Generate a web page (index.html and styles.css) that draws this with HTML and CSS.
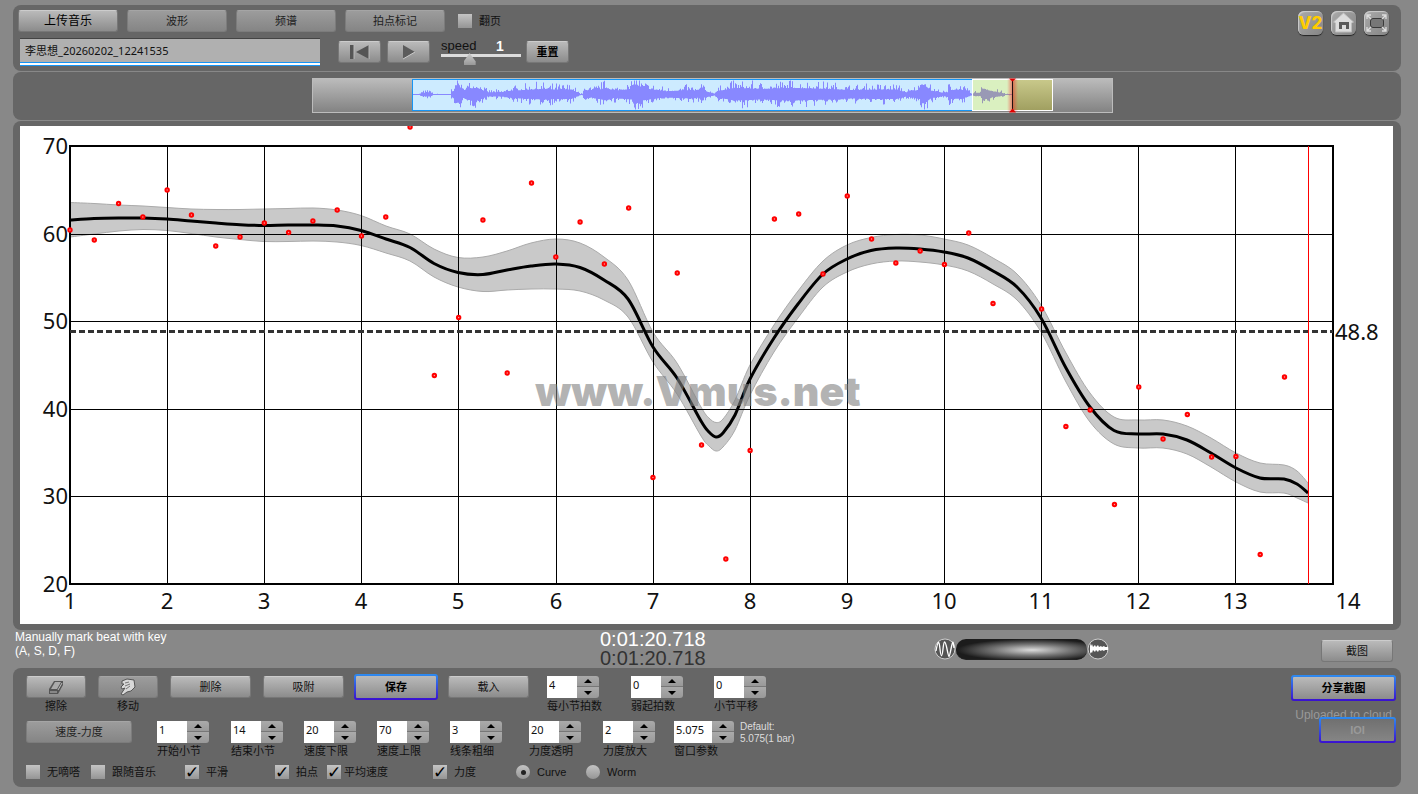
FILE: index.html
```html
<!DOCTYPE html>
<html lang="zh-CN">
<head>
<meta charset="utf-8">
<title>Vmus</title>
<link rel="stylesheet" href="styles.css">
</head>
<body>
<main class="app">
  <header class="panel top">
    <div class="top-left">
      <div class="row tabs">
        <button class="btn tab strong">上传音乐</button>
        <button class="btn tab dim">波形</button>
        <button class="btn tab dim">频谱</button>
        <button class="btn tab dim">拍点标记</button>
        <label class="check"><input type="checkbox"><span>翻页</span></label>
      </div>
      <div class="row transport">
        <input class="file-name" type="text" aria-label="文件名" value="李思想_20260202_12241535">
        <div class="row play-group">
          <button class="btn small" aria-label="回到开头"><svg width="22" height="18" viewBox="0 0 22 18"><path d="M1 2h4v14H1zM20 2v14L7 9z" fill="#555"/><path d="M20 2v14M5 2v14" stroke="#bbb"/></svg></button>
          <button class="btn small" aria-label="播放"><svg width="16" height="18" viewBox="0 0 16 18"><path d="M2 2v14l12-7z" fill="#5b5b5b"/><path d="M2 16l12-7" stroke="#ccc"/></svg></button>
        </div>
        <div class="speed">
          <label for="speed">speed</label><output for="speed">1</output>
          <input id="speed" type="range" min="0" max="3" step="0.1" value="1">
        </div>
        <button class="btn small bold">重置</button>
      </div>
    </div>
    <nav class="top-icons">
      <a class="icon v2" href="#v2">V2</a>
      <a class="icon" href="#home" aria-label="主页"><svg width="25" height="24" viewBox="0 0 25 24"><path d="M2.500 11L12.500 2 22.500 11 20.500 12v9h-16v-9z" fill="#ddd" stroke="#bbb"/><path d="M8 11h10v7h-3v-4h-4v4H8z" fill="#5a5a5a"/></svg></a>
      <a class="icon" href="#full" aria-label="全屏"><svg width="25" height="24" viewBox="0 0 25 24" fill="none"><rect x="6.500" y="7.500" width="13" height="9" rx="2.500" fill="#777" stroke="#3a3a3a"/><path d="M3 8V4h4M18 4h4v4M22 16v4h-4M7 20H3v-4M3 4l4 4M22 4l-4 4M22 20l-4-4M3 20l4-4" stroke="#ddd" stroke-width="1.300"/></svg></a>
    </nav>
  </header>

  <section class="panel overview">
    <svg id="wave" viewBox="311 78 801 35" role="img" aria-label="波形总览">
      <defs>
        <linearGradient id="track" x2="0" y2="1"><stop stop-color="#bcbcbc"/><stop offset="1" stop-color="#828282"/></linearGradient>
        <linearGradient id="olive" x2="0" y2="1"><stop stop-color="#c9c98b"/><stop offset="1" stop-color="#a09f60"/></linearGradient>
        <linearGradient id="glow"><stop stop-color="#f33" stop-opacity="0"/><stop offset=".5" stop-color="#e22" stop-opacity=".55"/><stop offset="1" stop-color="#f33" stop-opacity="0"/></linearGradient>
      </defs>
      <rect x="311.500" y="78.500" width="800" height="34" fill="url(#track)" stroke="#bcbcbc"/>
      <rect x="411.500" y="79.500" width="600" height="31" fill="#cdebff" stroke="#1795f5"/>
      <rect x="971.500" y="79.500" width="40" height="31" fill="#daf0c0"/>
      <rect x="1011.500" y="79.500" width="40" height="31" fill="url(#olive)"/>
      <path id="wave-main" fill="#8888ff"/>
      <path id="wave-tail" fill="#9999b5"/>
      <rect x="971.500" y="79.500" width="80" height="31" fill="none" stroke="#fff"/>
      <rect x="1006" y="79" width="11" height="33" fill="url(#glow)"/>
      <path d="M1011.500 80v31" stroke="#201010"/>
      <path d="M1008 78.500h7l-3.500 3zM1008 112.500h7l-3.500-4z" fill="#e00000"/>
    </svg>
  </section>

  <section class="panel chart-panel">
    <svg id="chart" viewBox="20 126 1373 498" role="img" aria-label="速度力度曲线">
      <path id="band" fill="#c9c9c9" stroke="#aaa" stroke-width="1"/>
      <g id="grid" stroke="#000" shape-rendering="crispEdges"></g>
      <path d="M70 331.500H1333" stroke="#333" stroke-width="3" stroke-dasharray="6 3"/>
      <path id="curve" fill="none" stroke="#000" stroke-width="3"/>
      <g id="dots" fill="#f9a0a0" stroke="#f00" stroke-width="2"></g>
      <g id="labels" class="axis"></g>
      <text class="axis" x="1335" y="340">48.8</text>
      <path d="M1308.500 146v438" stroke="#f00"/>
      <text class="watermark" x="698" y="406" text-anchor="middle">www.Vmus.net</text>
    </svg>
  </section>

  <section class="status">
    <p class="hint">Manually mark beat with key<br>(A, S, D, F)</p>
    <div class="clock"><time>0:01:20.718</time><time class="total">0:01:20.718</time></div>
    <div class="mix">
      <svg width="22" height="24" viewBox="0 0 22 24"><circle cx="11" cy="12" r="10" fill="#555" stroke="#ccc"/><path d="M2 14C4 3 5 3 6 12s2 9 3 0 2-10 4 0 2 10 4 0 2-8 3-1" fill="none" stroke="#fff" stroke-width="1.300"/></svg>
      <div class="mix-bar"></div>
      <svg width="22" height="24" viewBox="0 0 22 24"><circle cx="11" cy="12" r="10" fill="#555" stroke="#ccc"/><path d="M3 6l1 3 1-2 1 3 2-2 1 2 2-2 1 2 2-1 1 1 2-1 1 1 3 0v3l-3 0-1 1-2-1-1 1-2-1-1 2-2-2-1 2-2-2-1 3-1-1-1 2z" fill="#fff"/></svg>
    </div>
    <button class="btn shot">截图</button>
  </section>

  <footer class="panel bottom">
    <div class="controls">
      <div class="tool-row">
        <div class="tool"><button class="btn w60" aria-label="擦除"><svg width="20" height="18" viewBox="0 0 20 18"><path d="M3 11L8 3h9v4l-5 9H3z" fill="#555"/><path d="M9 4h6l-4 7H5z" fill="#aaa"/><path d="M12 12l4-7M4 14h7" stroke="#bbb"/></svg></button><span>擦除</span></div>
        <div class="tool"><button class="btn w60 dim" aria-label="移动"><svg width="20" height="20" viewBox="0 0 20 20"><path d="M4 4l5-2 7 1 1 7-4 4-4 1-4 3-2-1 4-6-3 1-1-2 3-3-2 0z" fill="#d8d8d8" stroke="#555"/><path d="M7 6l4-1M7 9l5-2M8 12l4-3" stroke="#777"/></svg></button><span>移动</span></div>
        <button class="btn w81">删除</button>
        <button class="btn w81">吸附</button>
        <button class="btn focus bold save">保存</button>
        <button class="btn w81">载入</button>
        <div class="fields beats">
          <div class="field"><div class="spin"><input id="f1" type="text" value="4"><button class="up" aria-label="加"></button><button class="down" aria-label="减"></button></div><label for="f1">每小节拍数</label></div>
          <div class="field"><div class="spin"><input id="f2" type="text" value="0"><button class="up" aria-label="加"></button><button class="down" aria-label="减"></button></div><label for="f2">弱起拍数</label></div>
          <div class="field"><div class="spin"><input id="f3" type="text" value="0"><button class="up" aria-label="加"></button><button class="down" aria-label="减"></button></div><label for="f3">小节平移</label></div>
        </div>
      </div>
      <div class="tool-row second">
        <button class="btn mode dim">速度-力度</button>
        <div class="fields params">
          <div class="field"><div class="spin"><input id="p1" type="text" value="1"><button class="up" aria-label="加"></button><button class="down" aria-label="减"></button></div><label for="p1">开始小节</label></div>
          <div class="field"><div class="spin"><input id="p2" type="text" value="14"><button class="up" aria-label="加"></button><button class="down" aria-label="减"></button></div><label for="p2">结束小节</label></div>
          <div class="field"><div class="spin"><input id="p3" type="text" value="20"><button class="up" aria-label="加"></button><button class="down" aria-label="减"></button></div><label for="p3">速度下限</label></div>
          <div class="field"><div class="spin"><input id="p4" type="text" value="70"><button class="up" aria-label="加"></button><button class="down" aria-label="减"></button></div><label for="p4">速度上限</label></div>
          <div class="field"><div class="spin"><input id="p5" type="text" value="3"><button class="up" aria-label="加"></button><button class="down" aria-label="减"></button></div><label for="p5">线条粗细</label></div>
          <div class="field"><div class="spin"><input id="p6" type="text" value="20"><button class="up" aria-label="加"></button><button class="down" aria-label="减"></button></div><label for="p6">力度透明</label></div>
          <div class="field"><div class="spin"><input id="p7" type="text" value="2"><button class="up" aria-label="加"></button><button class="down" aria-label="减"></button></div><label for="p7">力度放大</label></div>
          <div class="field"><div class="spin wide"><input id="p8" type="text" value="5.075"><button class="up" aria-label="加"></button><button class="down" aria-label="减"></button></div><label for="p8">窗口参数</label></div>
          <p class="default">Default:<br>5.075(1 bar)</p>
        </div>
      </div>
      <div class="options">
        <label class="check"><input type="checkbox"><span>无嘀嗒</span></label>
        <label class="check"><input type="checkbox"><span>跟随音乐</span></label>
        <label class="check"><input type="checkbox" checked><span>平滑</span></label>
        <label class="check"><input type="checkbox" checked><span>拍点</span></label>
        <label class="check tight"><input type="checkbox" checked><span>平均速度</span></label>
        <label class="check"><input type="checkbox" checked><span>力度</span></label>
        <label class="check"><input type="radio" name="view" checked><span>Curve</span></label>
        <label class="check"><input type="radio" name="view"><span>Worm</span></label>
      </div>
    </div>
    <div class="share">
      <button class="btn focus bold share-btn">分享截图</button>
      <span class="uploaded">Uploaded to cloud</span>
      <button class="btn focus ioi" disabled>IOI</button>
    </div>
  </footer>
</main>
<script src="script.js"></script>
</body>
</html>
```
FILE: styles.css
```css
* { box-sizing: border-box; }
body {
  margin: 0;
  background: #888;
  color: #111;
  font: 11px/16px "Liberation Sans", "Noto Sans CJK SC", sans-serif;
}
button, input { font: inherit; color: inherit; margin: 0; }
p { margin: 0; }
svg { display: block; }

.app { padding: 5px 17px 7px 13px; }
.panel { background: #666; border-radius: 8px; margin-bottom: 1px; }
.row { display: flex; align-items: center; }

.btn {
  height: 22px;
  padding: 0;
  border: 1px solid #777;
  border-top-color: #ccc;
  border-radius: 3px;
  background: linear-gradient(#bababa, #8c8c8c);
  display: flex;
  align-items: center;
  justify-content: center;
}
.dim { background: linear-gradient(#9c9c9c, #858585); border-color: #7c7c7c; border-top-color: #a5a5a5; color: #222; }
.bold { font-weight: bold; color: #000; }
.strong { font-size: 12px; color: #000; }
.small { width: 43px; }
.w60 { width: 60px; }
.w81 { width: 81px; }
.focus {
  height: 26px;
  margin: -2px;
  border: 2px solid transparent;
  background:
    linear-gradient(#bababa, #8c8c8c) padding-box,
    linear-gradient(#2d8cf0, #3a10d0) border-box;
}
.save { width: 84px; }

.top { display: flex; justify-content: space-between; height: 66px; padding: 5px 12px 3px 5px; }
.tabs { gap: 9px; }
.tab { width: 100px; }
.tabs .check { margin-left: 4px; }
.transport { margin: 6px 0 0 2px; }
.file-name {
  width: 300px;
  height: 28px;
  padding: 0 5px 6px;
  border: 0;
  border-top: 1px solid #444;
  background:
    linear-gradient(#1795f5 1px, #fff 1px, #fff 3px, #1795f5 3px) bottom / 100% 4px no-repeat,
    #b0b0b0;
  font-family: "Noto Sans", "Noto Sans CJK SC", sans-serif;
}
.play-group { gap: 6px; margin: 0 11px 0 18px; }

.speed { display: grid; grid-template-columns: 55px 25px; width: 80px; margin-right: 5px; font-size: 13px; line-height: 14px; }
.speed output { color: #fff; font-weight: bold; font-size: 14px; }
.speed input { grid-column: 1 / 3; }
input[type="range"] { appearance: none; width: 80px; height: 12px; background: linear-gradient(#ddd, #ddd) 0 1px / 100% 3px no-repeat; }
input[type="range"]::-webkit-slider-thumb {
  appearance: none;
  width: 12px;
  height: 12px;
  background: linear-gradient(#ccc, #999);
  clip-path: polygon(50% 0, 100% 70%, 100% 100%, 0 100%, 0 70%);
}

.top-icons { display: flex; gap: 8px; padding-top: 1px; }
.icon {
  width: 25px;
  height: 24px;
  border-radius: 6px;
  background: linear-gradient(135deg, #aaa, #858585);
  box-shadow: inset 1px 1px 1px #ccc, 0 1px 1px #222;
}
.v2 { color: #fc0; font: 800 17px/24px "Inter", sans-serif; text-align: center; text-decoration: none; }

.check { display: flex; align-items: center; gap: 7px; white-space: nowrap; }
.check.tight { gap: 3px; }
.check input {
  appearance: none;
  width: 14px;
  height: 14px;
  background: linear-gradient(#c4c4c4, #959595);
  display: grid;
  place-items: center;
}
.check input[type="radio"] { border-radius: 50%; }
.check input[type="checkbox"]:checked::before { content: "✓"; font: bold 17px/14px "DejaVu Sans", sans-serif; color: #000; }
.check input[type="radio"]:checked::before { content: ""; width: 5px; height: 5px; border-radius: 50%; background: #222; }

.overview { padding: 6px 0 7px 10px; }
.overview svg { width: 801px; max-width: 100%; margin: 0 auto; }

.chart-panel { padding: 5px 8px 6px 7px; margin-bottom: 0; }
.chart-panel svg { width: 100%; background: #fff; }
.axis { font: 22px "Noto Sans", sans-serif; fill: #111; }
.watermark { font: 900 41px "Inter", sans-serif; fill: #808080; fill-opacity: .6; }

.status { display: grid; grid-template-columns: 587px 334px 1fr 72px; padding-right: 8px; height: 38px; }
.hint { padding-left: 2px; color: #fff; font-size: 12px; line-height: 14px; }
.clock { font-size: 20px; line-height: 19px; color: #fff; }
.clock time { display: block; }
.clock .total { color: #333; }
.mix { display: flex; align-items: center; }
.mix-bar { width: 131px; height: 21px; border-radius: 10px; background: radial-gradient(ellipse at 58% 55%, #ddd, #777 35%, #1c1c1c 70%); border-bottom: 1px solid #222; }
.shot { margin-top: 10px; }

.bottom { display: flex; justify-content: space-between; height: 119px; padding: 8px 7px 0 13px; margin: 0; }
.tool-row { display: flex; align-items: flex-start; gap: 12px; height: 45px; }
.tool-row .save { margin: -2px; }
.tool { display: flex; flex-direction: column; align-items: center; }
.tool span, .field label { line-height: 16px; }
.fields { display: grid; }
.beats { grid-template-columns: 84px 83px 60px; margin-left: 6px; }
.params { grid-template-columns: 74px 73px 73px 73px 79px 74px 71px 66px auto; }
.second { gap: 25px; }
.mode { width: 106px; }
.field { display: flex; flex-direction: column; white-space: nowrap; }
.spin { display: grid; grid-template: 11px 11px / 30px 22px; }
.spin.wide { grid-template-columns: 38px 22px; }
.spin input {
  grid-row: 1 / 3;
  width: 100%;
  height: 22px;
  padding: 0 2px 5px;
  border: 0;
  background: #fff;
  font-family: "Noto Sans", sans-serif;
}
.spin button { padding: 0; border: 0; background: linear-gradient(#aaa, #999); display: grid; place-items: center; grid-column: 2; }
.spin .up { border-radius: 0 3px 0 0; border-bottom: 1px solid #777; }
.spin .down { border-radius: 0 0 3px 0; }
.spin button::before { content: ""; border: 4px solid transparent; border-top-width: 0; border-bottom: 4px solid #000; }
.spin .down::before { transform: rotate(180deg); }
.default { color: #ddd; font-size: 10px; line-height: 12px; }
.options { display: grid; grid-template-columns: 65px 94px 90px 52px 106px 83px 70px auto; margin-top: -2px; }

.share { display: flex; flex-direction: column; align-items: flex-end; padding-top: 1px; }
.share-btn { width: 105px; }
.uploaded { margin: 8px 2px 0 0; color: #999; font-size: 12px; }
.share .ioi {
  width: 77px;
  margin-top: -6px;
  background:
    linear-gradient(#707070, #858585) padding-box,
    linear-gradient(#2d8cf0, #3a10d0) border-box;
  color: #999;
  font-weight: bold;
}
```
FILE: script.js
```js
const NS = "http://www.w3.org/2000/svg";
const byId = (id) => document.getElementById(id);

function add(parent, tag, attrs, text) {
  const el = document.createElementNS(NS, tag);
  for (const key in attrs) el.setAttribute(key, attrs[key]);
  if (text !== undefined) el.textContent = text;
  parent.appendChild(el);
}

// Grid and axis labels
const barX = (bar) => 70 + (bar - 1) * 97.12;
for (let bar = 1; bar <= 14; bar++) {
  const x = Math.round(barX(bar));
  if (bar > 1 && bar < 14) add(byId("grid"), "path", { d: `M${x + 0.5} 146V584` });
  add(byId("labels"), "text", { x: bar === 14 ? 1348 : x, y: 609, "text-anchor": "middle" }, bar);
}
for (let v = 20; v <= 70; v += 10) {
  const y = Math.round(146 + (70 - v) * 8.75);
  if (v > 20 && v < 70) add(byId("grid"), "path", { d: `M70 ${y + 0.5}H1333` });
  add(byId("labels"), "text", { x: 68, y: y + 8, "text-anchor": "end" }, v);
}
add(byId("grid"), "rect", { x: 70, y: 146, width: 1263, height: 438, fill: "none", "stroke-width": 2 });

// Measured beats, one per quarter of a bar
const beats = [230, 240, 203.5, 217, 190, 215, 246, 237, 223, 232.5, 221, 210, 236, 217, 127, 375.5, 317.5, 220, 373, 183,
  257, 222, 264, 208, 477.5, 273, 445, 559, 450.5, 219, 214, 274, 196, 239, 263, 251, 264.5, 233, 303.5, null,
  309, 426.5, 410, 504.5, 387, 439, 414.5, 457, 456.5, 554.5, 377];
beats.forEach((y, i) => {
  if (y !== null) add(byId("dots"), "circle", { cx: 70 + i * 24.29, cy: y, r: 1.7 });
});

// Smoothed tempo: x, upper edge, centre, lower edge
const tempo = [[70, 202.5, 220, 237], [94, 203.5, 218.5, 234], [119, 205, 218, 231], [143, 206, 218, 229.5], [167, 207.5, 219, 230.5],
  [191, 209, 221, 233.5], [216, 209.5, 223, 237], [240, 209.5, 224.7, 239.5], [264, 209, 225.5, 241.5], [288, 208.5, 225, 241.5],
  [313, 208, 225, 241], [337, 210, 226, 242], [361, 215.5, 230.5, 245.5], [386, 226, 239, 253], [410, 234, 247.5, 261],
  [434, 249, 263.5, 277], [458, 257.5, 272.5, 287], [483, 257, 274.5, 291.5], [507, 251, 270, 290], [531, 243, 266, 289],
  [556, 239, 264, 289], [580, 243, 267.5, 291], [604, 257, 280, 300], [628, 280, 299, 317], [653, 332, 347, 362],
  [677, 363, 378, 394], [701, 407, 421, 436], [709, 418, 432, 446], [716, 422.5, 437, 451], [723, 419, 433, 447],
  [735, 400, 415, 430], [750, 365, 379, 395], [774, 325, 338, 352], [798, 291, 304, 318], [823, 261, 274, 287],
  [847, 245, 259, 272], [871, 237.5, 250.5, 264], [896, 234.5, 248, 261], [920, 235, 249, 262], [944, 239, 252, 265],
  [968, 245, 258, 271], [993, 258, 271, 284], [1017, 274, 287, 300], [1041, 305, 318, 332], [1066, 353, 368, 382],
  [1090, 393, 407, 422], [1114, 417, 430.5, 444], [1138, 420, 434, 448], [1163, 420, 434, 448], [1187, 426, 440, 454],
  [1211, 438, 453, 467], [1236, 453, 468, 482], [1260, 463, 478, 492], [1284, 465, 479, 493], [1297, 471, 484, 498],
  [1308, 483, 493, 503]];

function spline(points) {
  let d = "";
  for (let i = 0; i < points.length - 1; i++) {
    const a = points[i - 1] || points[i];
    const b = points[i];
    const c = points[i + 1];
    const e = points[i + 2] || c;
    d += `C${b[0] + (c[0] - a[0]) / 6} ${b[1] + (c[1] - a[1]) / 6} ${c[0] - (e[0] - b[0]) / 6} ${c[1] - (e[1] - b[1]) / 6} ${c[0]} ${c[1]}`;
  }
  return d;
}
const upper = tempo.map((p) => [p[0], p[1]]);
const centre = tempo.map((p) => [p[0], p[2]]);
const lower = tempo.map((p) => [p[0], p[3]]).reverse();
byId("curve").setAttribute("d", `M${centre[0]}` + spline(centre));
byId("band").setAttribute("d", `M${upper[0]}` + spline(upper) + `L${lower[0]}` + spline(lower) + "Z");

// Waveform: x, loudness
const loud = [[412, 0.5], [418, 0.7], [420, 3], [428, 4], [429, 6], [430, 3], [432, 0.6], [449, 0.5], [450, 8], [452, 4], [454, 17],
  [458, 16], [461, 6], [466, 11], [476, 12], [480, 9], [486, 4], [500, 4], [510, 7], [540, 10], [550, 9], [570, 9], [577, 3],
  [579, 1], [581, 1], [583, 9], [590, 6], [605, 12], [612, 7], [630, 10], [632, 18], [635, 18], [640, 12], [655, 8], [665, 6], [690, 8],
  [698, 6], [700, 15], [703, 6], [713, 2], [716, 6], [733, 12], [760, 10], [790, 12], [830, 10], [850, 8], [880, 9], [895, 9],
  [905, 4], [918, 9], [920, 18], [923, 17], [930, 7], [942, 3], [946, 4], [948, 13], [950, 8], [960, 9], [970, 2], [975, 3], [979, 3],
  [981, 11], [990, 6], [1000, 3], [1004, 1], [1011, 0.5]];
let seed = 7;
const random = () => (seed = (seed * 16807) % 2147483647) / 2147483647;
function loudness(x) {
  const i = Math.max(1, loud.findIndex((p) => p[0] >= x));
  const [a, b] = [loud[i - 1], loud[i]];
  return a[1] + (b[1] - a[1]) * (x - a[0]) / (b[0] - a[0]);
}
let main = "";
let tail = "";
for (let x = 412; x < 1011; x++) {
  const level = loudness(x);
  const up = Math.max(0.5, Math.min(14, level * (0.55 + 0.8 * random() ** 4)));
  const down = Math.max(0.5, Math.min(15, level * (0.5 + 0.7 * random() ** 4)));
  const bar = `M${x} ${94.5 - up}h1v${up + down}h-1z`;
  if (x < 971) main += bar; else tail += bar;
}
byId("wave-main").setAttribute("d", main);
byId("wave-tail").setAttribute("d", tail);
```
